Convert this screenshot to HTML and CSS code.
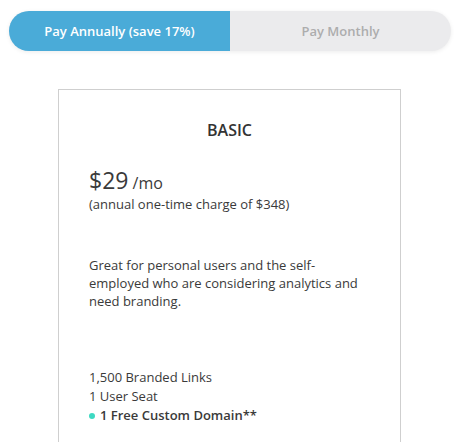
FILE: index.html
```html
<!DOCTYPE html>
<html lang="en">
<head>
    <meta charset="UTF-8">
    <title>Pricing</title>
    <link rel="stylesheet" href="styles.css">
</head>
<body>
    <div class="toggle">
        <div class="toggle-option active">Pay Annually (save 17%)</div>
        <div class="toggle-option">Pay Monthly</div>
    </div>

    <div class="plan">
        <h2 class="plan-name">BASIC</h2>

        <div class="price">
            <span class="amount">$29</span> <span class="per">/mo</span>
        </div>
        <div class="charge">(annual one-time charge of $348)</div>

        <p class="desc">Great for personal users and the self-employed who are considering analytics and need branding.</p>

        <ul class="features">
            <li>1,500 Branded Links</li>
            <li>1 User Seat</li>
            <li class="highlight">1 Free Custom Domain**</li>
        </ul>
    </div>
</body>
</html>
```

FILE: styles.css
```css
body{
    margin: 0;
    font-family: "Open Sans", "Liberation Sans", sans-serif;
    color: #3a3a3a;
    background: #fff;
}

/* annual / monthly switch */
.toggle{
    display: flex;
    height: 40px;
    margin: 11px 10px 0 9px;
    border-radius: 20px;
    overflow: hidden;
    background-color: #ebebed;
    box-shadow: 0 1px 4px rgba(0, 0, 0, 0.08);
}
.toggle-option{
    flex: 1;
    display: flex;
    align-items: center;
    justify-content: center;
    font-size: 13px;
    font-weight: 600;
    color: #adadad;
}
.toggle-option.active{
    background-color: #4aabd8;
    color: #fff;
}

/* plan card */
.plan{
    width: 281px;
    margin: 38px 0 0 58px;
    padding: 30px 30px 40px;
    border: 1px solid #cfcfcf;
}
.plan-name{
    margin: 0;
    text-align: center;
    font-size: 16px;
    font-weight: 600;
    line-height: 20px;
    color: #333;
}
.price{
    margin-top: 28px;
    line-height: 24px;
}
.amount{
    font-size: 23px;
}
.per{
    font-size: 16px;
}
.charge{
    font-size: 13px;
    line-height: 18px;
}
.desc{
    margin: 43px 0 0;
    font-size: 13px;
    line-height: 18px;
}
.features{
    list-style: none;
    margin: 58px 0 0;
    padding: 0;
    font-size: 13px;
    line-height: 19px;
}
.features .highlight{
    display: flex;
    align-items: center;
    gap: 5px;
    font-weight: 600;
}
.features .highlight::before{
    content: "";
    width: 6px;
    height: 6px;
    border-radius: 50%;
    background-color: #3ed9c2;
}
```
